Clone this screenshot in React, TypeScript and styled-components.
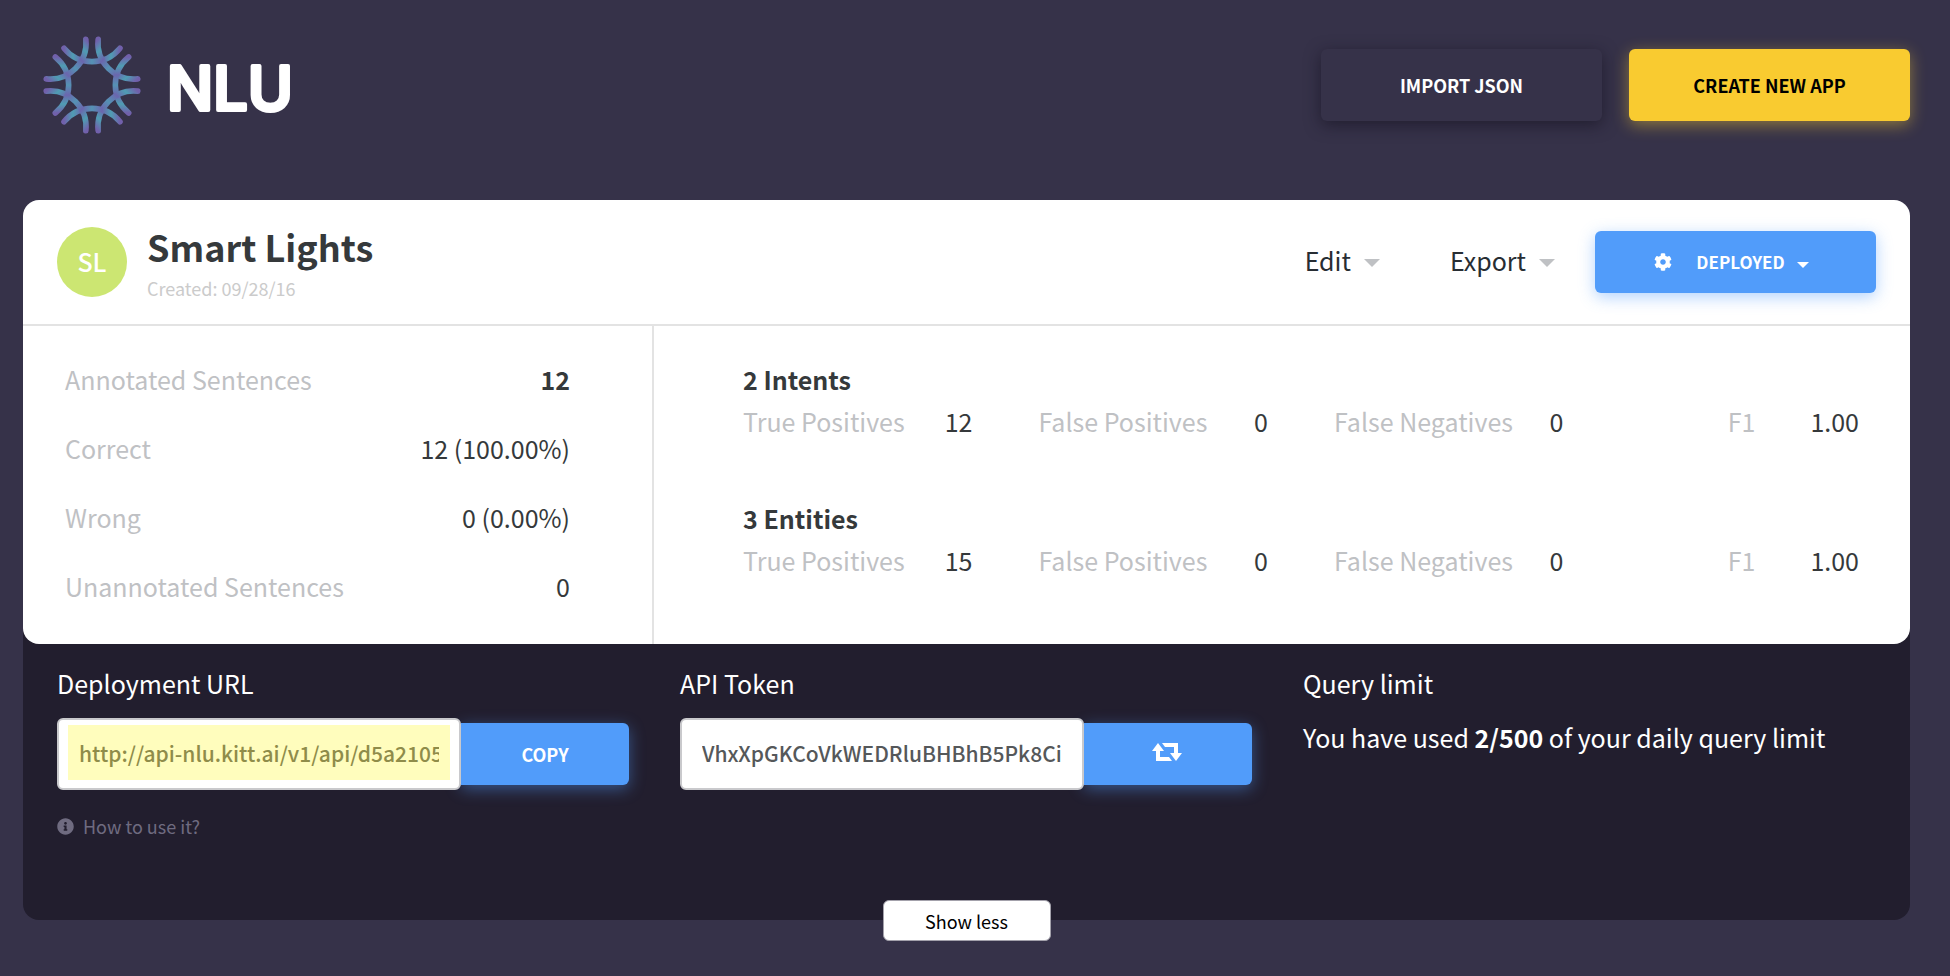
import React from 'react';
import styled, { createGlobalStyle, css } from 'styled-components';
import { FaCog, FaInfoCircle } from 'react-icons/fa';

const GlobalStyle = createGlobalStyle`
  *, *::before, *::after { box-sizing: border-box; }
  body {
    margin: 0;
    background: #363249;
    color: #35393b;
    font-family: "Noto Sans CJK SC", "Noto Sans", sans-serif;
    font-size: 25px;
    line-height: 42px;
  }
  h1, h2, p, dl, dd { margin: 0; }
  button, input { font: inherit; }
`;

const Page = styled.div`
  min-height: 100vh;
  padding: 36px 40px 56px 23px;
`;

const Header = styled.header`
  display: flex;
  align-items: center;
  justify-content: space-between;
  margin-bottom: 66px;
  padding-left: 19px;
`;

const Brand = styled.a`
  display: flex;
  align-items: center;
  gap: 23px;
  height: 98px;
  color: #fff;
`;

const Actions = styled.div`
  display: flex;
  gap: 27px;
`;

const tones = {
  dark: css`
    background: #363249;
    color: #fff;
    box-shadow: 0 4px 16px rgba(20, 16, 32, 0.6);
  `,
  yellow: css`
    background: #f9cb30;
    color: #000;
    box-shadow: 0 4px 16px rgba(249, 203, 48, 0.45);
  `,
  blue: css`
    background: #519cfa;
    color: #fff;
    box-shadow: 0 4px 16px rgba(81, 156, 250, 0.45);
  `,
};

const Button = styled.button<{ $tone: keyof typeof tones; $tall?: boolean }>`
  display: flex;
  align-items: center;
  justify-content: center;
  width: 281px;
  height: ${(p) => (p.$tall ? 72 : 62)}px;
  padding: 0;
  border: 0;
  border-radius: 6px;
  font-size: 18px;
  font-weight: 700;
  line-height: 24px;
  cursor: pointer;
  ${(p) => tones[p.$tone]}
`;

const DeployButton = styled(Button)`
  padding: 0 8px 0 0;
  font-size: 17px;
`;

const GroupButton = styled(Button)`
  flex: none;
  width: 168px;
  border-radius: 0 6px 6px 0;
`;

const IconButton = styled(GroupButton)`
  padding: 0 2px 4px 0;
`;

const Card = styled.section`
  position: relative;
  z-index: 1;
  border-radius: 16px;
  background: #fff;
`;

const CardHead = styled.div`
  display: flex;
  align-items: center;
  height: 126px;
  padding: 0 34px;
  border-bottom: 2px solid #e3e3e3;
`;

const Avatar = styled.div`
  display: grid;
  place-items: center;
  width: 70px;
  height: 70px;
  margin-right: 20px;
  padding-bottom: 2px;
  border-radius: 50%;
  background: #cce672;
  color: #fff;
  font-weight: 500;
`;

const Titles = styled.div`
  display: grid;
  gap: 10px;
  margin-right: auto;
  padding-top: 2px;
`;

const Title = styled.h1`
  font-size: 36px;
  font-weight: 700;
  line-height: 40px;
`;

const Created = styled.p`
  color: #cbcbcb;
  font-size: 18px;
  line-height: 24px;
`;

const MenuButton = styled.button`
  display: flex;
  align-items: center;
  gap: 13px;
  padding: 0 0 4px;
  border: 0;
  background: none;
  color: #272d33;
  cursor: pointer;
`;

const Menus = styled.div`
  display: flex;
  gap: 70px;
  margin-right: 40px;
`;

const Caret = styled.span<{ $size: number; $color: string }>`
  margin-top: 5px;
  border: ${(p) => p.$size}px solid transparent;
  border-top-color: ${(p) => p.$color};
  border-bottom: 0;
`;

const DeployLabel = styled.span`
  margin: 0 12px 0 24px;
`;

const Stats = styled.div`
  display: grid;
  grid-template-columns: 1fr 2fr;
`;

const Sentences = styled.dl`
  display: grid;
  gap: 27px;
  padding: 32px 82px 37px 42px;
`;

const Scores = styled.div`
  display: grid;
  align-content: start;
  gap: 55px;
  padding: 32px 51px 37px 89px;
  border-left: 2px solid #e3e3e3;
`;

const ScoreTitle = styled.h2`
  font-size: 25px;
`;

const ScoreRow = styled.dl`
  display: grid;
  grid-template-columns: repeat(4, 1fr);
  gap: 66px;
`;

const Stat = styled.div<{ $packed?: boolean }>`
  display: flex;
  justify-content: ${(p) => (p.$packed ? 'flex-end' : 'space-between')};
  gap: ${(p) => (p.$packed ? 55 : 12)}px;
  white-space: nowrap;
`;

const Term = styled.dt`
  color: #bfc1c4;
`;

const Value = styled.dd<{ $bold?: boolean }>`
  font-weight: ${(p) => (p.$bold ? 700 : 400)};
`;

const Deployment = styled.section`
  position: relative;
  display: grid;
  grid-template-columns: repeat(3, 1fr);
  gap: 51px;
  margin-top: -16px;
  padding: 38px 35px 82px 34px;
  border-radius: 0 0 16px 16px;
  background: #221e2e;
  color: #fff;
`;

const Field = styled.div`
  min-width: 0;
`;

const FieldLabel = styled.label`
  display: block;
  margin-bottom: 18px;
  line-height: 34px;
`;

const FieldTitle = styled.h2`
  margin-bottom: 18px;
  font-size: 25px;
  font-weight: 400;
  line-height: 34px;
`;

const InputGroup = styled.div`
  display: flex;
  align-items: center;
`;

const InputFrame = styled.div`
  position: relative;
  flex: 1;
  display: flex;
  min-width: 0;
  height: 72px;
  padding: 5px 9px 8px;
  border: 2px solid #c9c9cc;
  border-radius: 6px;
  background: #fff;
`;

const TextInput = styled.input<{ $marked?: boolean }>`
  width: 100%;
  min-width: 0;
  padding: 0 11px;
  border: 0;
  outline: 0;
  background: ${(p) => (p.$marked ? '#fffdbd' : '#fff')};
  color: ${(p) => (p.$marked ? '#8f8c4a' : '#55585a')};
  font-size: 21px;
  font-weight: 500;
`;

const HelpLink = styled.a`
  display: flex;
  align-items: center;
  gap: 9px;
  width: fit-content;
  margin-top: 24px;
  color: #6f6b80;
  font-size: 18px;
  line-height: 24px;
  text-decoration: none;
`;

const Limit = styled.p`
  line-height: 38px;
`;

const ShowLess = styled.button`
  position: absolute;
  bottom: -21px;
  left: 50%;
  width: 168px;
  height: 41px;
  margin-left: -84px;
  padding: 0;
  border: 1px solid #a3a1ab;
  border-radius: 6px;
  background: #fff;
  color: #000;
  font-size: 18px;
  line-height: 24px;
  cursor: pointer;
`;

const angles = [0, 45, 90, 135, 180, 225, 270, 315];

const Snowflake = () => (
  <svg width="101" height="98" viewBox="-50 -49 101 98" aria-hidden="true">
    <defs>
      <linearGradient id="arm" gradientUnits="userSpaceOnUse" x1="-28" y1="0" x2="28" y2="0">
        <stop offset="0" stopColor="#7160ab" />
        <stop offset="0.16" stopColor="#4f9db3" />
        <stop offset="0.32" stopColor="#6b66ae" />
        <stop offset="0.5" stopColor="#5592b4" />
        <stop offset="0.68" stopColor="#6b66ae" />
        <stop offset="0.84" stopColor="#4f9db3" />
        <stop offset="1" stopColor="#7160ab" />
      </linearGradient>
    </defs>
    {angles.map((a) => (
      <path
        key={a}
        d="M-28 -36.7A36 36 0 0 0 28 -36.7"
        transform={`rotate(${a})`}
        fill="none"
        stroke="url(#arm)"
        strokeWidth="5.6"
        strokeLinecap="round"
      />
    ))}
  </svg>
);

const Wordmark = () => (
  <svg width="150" height="90" viewBox="0 0 150 90">
    <text
      x="1"
      y="70"
      fill="#fff"
      stroke="#fff"
      strokeWidth="4"
      strokeLinejoin="round"
      fontFamily="Inter, sans-serif"
      fontSize="61"
      fontWeight="500"
    >
      NLU
    </text>
  </svg>
);

const RetweetIcon = () => (
  <svg width="30" height="18" viewBox="0 0 30 18" fill="#fff" aria-hidden="true">
    <path d="M6 0L12 8H8V14H17L20 18H4V8H0Z" />
    <path d="M24 18L18 10H22V4H13L10 0H26V10H30Z" />
  </svg>
);

const sentences = [
  { label: 'Annotated Sentences', value: '12', bold: true },
  { label: 'Correct', value: '12 (100.00%)' },
  { label: 'Wrong', value: '0 (0.00%)' },
  { label: 'Unannotated Sentences', value: '0' },
];

const scores = [
  { title: '2 Intents', values: ['12', '0', '0', '1.00'] },
  { title: '3 Entities', values: ['15', '0', '0', '1.00'] },
];

const scoreLabels = ['True Positives', 'False Positives', 'False Negatives', 'F1'];

export default function App() {
  return (
    <>
      <GlobalStyle />
      <Page>
        <Header>
          <Brand href="#">
            <Snowflake />
            <Wordmark />
          </Brand>
          <Actions>
            <Button $tone="dark" $tall>IMPORT JSON</Button>
            <Button $tone="yellow" $tall>CREATE NEW APP</Button>
          </Actions>
        </Header>
        <main>
          <Card>
            <CardHead>
              <Avatar>SL</Avatar>
              <Titles>
                <Title>Smart Lights</Title>
                <Created>Created: 09/28/16</Created>
              </Titles>
              <Menus>
                <MenuButton>Edit <Caret $size={8} $color="#bfc1c4" /></MenuButton>
                <MenuButton>Export <Caret $size={8} $color="#bfc1c4" /></MenuButton>
              </Menus>
              <DeployButton $tone="blue">
                <FaCog size={18} />
                <DeployLabel>DEPLOYED</DeployLabel>
                <Caret $size={6} $color="#fff" />
              </DeployButton>
            </CardHead>
            <Stats>
              <Sentences>
                {sentences.map((s) => (
                  <Stat key={s.label}>
                    <Term>{s.label}</Term>
                    <Value $bold={s.bold}>{s.value}</Value>
                  </Stat>
                ))}
              </Sentences>
              <Scores>
                {scores.map((group) => (
                  <div key={group.title}>
                    <ScoreTitle>{group.title}</ScoreTitle>
                    <ScoreRow>
                      {scoreLabels.map((label, i) => (
                        <Stat key={label} $packed={label === 'F1'}>
                          <Term>{label}</Term>
                          <Value>{group.values[i]}</Value>
                        </Stat>
                      ))}
                    </ScoreRow>
                  </div>
                ))}
              </Scores>
            </Stats>
          </Card>
          <Deployment>
            <Field>
              <FieldLabel htmlFor="url">Deployment URL</FieldLabel>
              <InputGroup>
                <InputFrame>
                  <TextInput id="url" $marked readOnly defaultValue="http://api-nlu.kitt.ai/v1/api/d5a2105" />
                </InputFrame>
                <GroupButton $tone="blue">COPY</GroupButton>
              </InputGroup>
              <HelpLink href="#">
                <FaInfoCircle size={17} />
                How to use it?
              </HelpLink>
            </Field>
            <Field>
              <FieldLabel htmlFor="token">API Token</FieldLabel>
              <InputGroup>
                <InputFrame>
                  <TextInput id="token" readOnly defaultValue="VhxXpGKCoVkWEDRluBHBhB5Pk8Ci" />
                </InputFrame>
                <IconButton $tone="blue" aria-label="Renew token">
                  <RetweetIcon />
                </IconButton>
              </InputGroup>
            </Field>
            <Field>
              <FieldTitle>Query limit</FieldTitle>
              <Limit>
                You have used <strong>2/500</strong> of your daily query limit
              </Limit>
            </Field>
            <ShowLess>Show less</ShowLess>
          </Deployment>
        </main>
      </Page>
    </>
  );
}
